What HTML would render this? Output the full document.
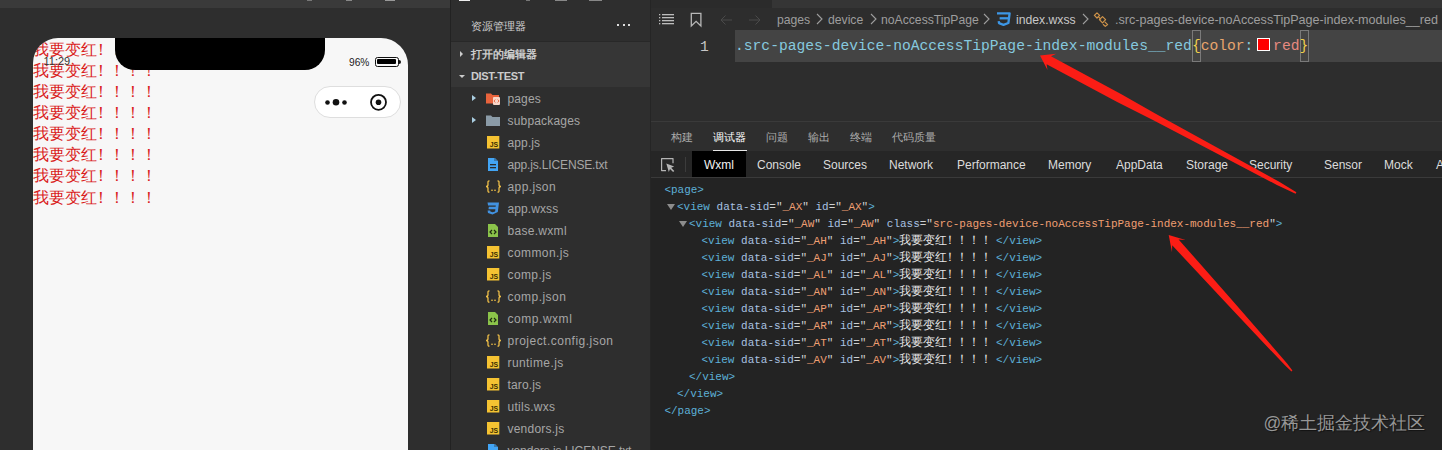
<!DOCTYPE html>
<html><head><meta charset="utf-8">
<style>
*{margin:0;padding:0;box-sizing:border-box}
html,body{width:1442px;height:450px;overflow:hidden;background:#2d2d2d;font-family:"Liberation Sans",sans-serif}
.a{position:absolute}
.mono{font-family:"Liberation Mono",monospace}
#sim{left:0;top:0;width:450px;height:450px;background:#2e2e2e;overflow:hidden}
#simtop{left:0;top:0;width:450px;height:8px;background:#3a3a3a}
#phone{left:33px;top:38px;width:375px;height:420px;background:#f7f7f7;border-radius:25px 27px 0 0;overflow:hidden}
.ex{margin-left:-4.1px;letter-spacing:0.05px}
.rl{position:absolute;left:0;color:#da1d1d;font-size:16px;line-height:21px;white-space:pre}
#notch{left:82px;top:0;width:210px;height:32px;background:#000;border-radius:0 0 20px 20px}
#sep1{left:450px;top:0;width:1px;height:450px;background:#222}
#exp{left:451px;top:0;width:199px;height:450px;background:#2e2e2e;overflow:hidden}
#sep2{left:650px;top:0;width:1px;height:450px;background:#252525}
#ed{left:651px;top:0;width:791px;height:450px;background:#2d2d2d;overflow:hidden}
.row{position:absolute;left:0;width:199px;height:22px;color:#a6a6a6;font-size:12px;line-height:22px;white-space:pre}
.row .t{position:absolute;left:56.5px;top:1px}
.row .tri{position:absolute;left:21px;top:8px;width:0;height:0;border-left:4.5px solid #a9cde0;border-top:3px solid transparent;border-bottom:3px solid transparent}
.row .ic{position:absolute;left:35px;top:5px;width:14px;height:13px}
.wx{font-size:10.99px;line-height:17px;white-space:pre;color:#cfd0d0}
.tg{color:#5db0d7}
.an{color:#a9c2e2}
.av{color:#f09f72}
.eq{color:#cfd0d0}
.cj{font-family:"Liberation Sans",sans-serif;font-size:11.6px;line-height:0;color:#e6e6e6;margin-right:3.9px}
.wtri{width:0;height:0;border-top:6px solid #8c8c8c;border-left:4px solid transparent;border-right:4px solid transparent}
.bc{top:11.7px;font-size:12.2px;color:#9e9e9e;white-space:pre;line-height:16px}
.chev{top:13px;width:8px;height:12px}
.chev path{fill:none;stroke:#9e9e9e;stroke-width:1.1}
.code{font-size:14.65px;line-height:18px;white-space:pre}
.ptab{top:130px;font-size:11.3px;color:#acacac;line-height:14px;white-space:pre}
.dtab{top:158px;font-size:12px;color:#dcdcdc;line-height:14px;white-space:pre}
</style></head><body>
<div id="sim" class="a">
  <div id="simtop" class="a"></div>
  <div class="a" style="left:307px;top:0;width:5px;height:1px;background:#777"></div>
  <div class="a" style="left:346px;top:0;width:6px;height:1px;background:#888"></div>
  <div class="a" style="left:385px;top:0;width:10px;height:1px;background:#999"></div>

  <div id="phone" class="a">
    <div class="rl" style="top:0.8px">我要变红<span class="ex">！！！！</span></div>
    <div class="rl" style="top:21.9px">我要变红<span class="ex">！！！！</span></div>
    <div class="rl" style="top:43.0px">我要变红<span class="ex">！！！！</span></div>
    <div class="rl" style="top:64.1px">我要变红<span class="ex">！！！！</span></div>
    <div class="rl" style="top:85.2px">我要变红<span class="ex">！！！！</span></div>
    <div class="rl" style="top:106.3px">我要变红<span class="ex">！！！！</span></div>
    <div class="rl" style="top:127.4px">我要变红<span class="ex">！！！！</span></div>
    <div class="rl" style="top:148.5px">我要变红<span class="ex">！！！！</span></div>
    <div id="notch" class="a"></div>
    <div class="a" style="left:10.5px;top:16.8px;font-size:11px;color:#333">11:29</div>
    <div class="a" style="left:316px;top:18.6px;font-size:10.2px;color:#1a1a1a">96%</div>
    <div class="a" style="left:342px;top:19px;width:23.5px;height:10.3px;border:1.5px solid #111;border-radius:2.5px"><div class="a" style="left:0.8px;top:0.8px;width:18.8px;height:5.7px;background:#000;border-radius:1px"></div></div>
    <div class="a" style="left:366px;top:22px;width:2px;height:4px;background:#111;border-radius:0 2px 2px 0"></div>
    <div class="a" style="left:281px;top:48px;width:87px;height:32px;border:1px solid #dedede;border-radius:16px;background:#fff"></div>
    <svg class="a" style="left:280px;top:48px" width="90" height="34" viewBox="0 0 90 34"><g fill="#111"><circle cx="14.5" cy="16.5" r="2.3"/><circle cx="23" cy="16.3" r="3.3"/><circle cx="31.5" cy="16.5" r="2.3"/><circle cx="65.5" cy="16.3" r="2.8"/></g><circle cx="65.5" cy="16.3" r="7.5" fill="none" stroke="#111" stroke-width="1.8"/></svg>
  </div>
</div>
<div id="sep1" class="a"></div>
<div id="exp" class="a">
  <div class="a" style="left:8px;top:0;width:11px;height:1px;background:#eee"></div>
  <div class="a" style="left:75px;top:0;width:4px;height:1px;background:#777"></div>
  <div class="a" style="left:104px;top:0;width:12px;height:1px;background:#888"></div>
  <div class="a" style="left:138px;top:0;width:13px;height:1px;background:#888"></div>
  <div class="a" style="left:20px;top:19px;font-size:11px;color:#d0d0d0">资源管理器</div>
  <div class="a" style="left:166px;top:24px;width:2px;height:2px;background:#ddd"></div><div class="a" style="left:171.5px;top:24px;width:2px;height:2px;background:#ddd"></div><div class="a" style="left:177px;top:24px;width:2px;height:2px;background:#ddd"></div>
  <div class="a" style="left:0;top:41px;width:199px;height:1px;background:#282828"></div>
  <div class="a" style="left:0;top:42px;width:199px;height:45px;background:#363636"></div>
  <div class="a" style="left:8.5px;top:50.5px;width:0;height:0;border-left:3.8px solid #ccc;border-top:3.3px solid transparent;border-bottom:3.3px solid transparent"></div>
  <div class="a" style="left:20px;top:47px;font-size:11px;font-weight:bold;color:#ccc">打开的编辑器</div>
  
  <div class="a" style="left:7.8px;top:74.5px;width:0;height:0;border-top:3.8px solid #ccc;border-left:3.2px solid transparent;border-right:3.2px solid transparent"></div>
  <div class="a" style="left:20px;top:70px;font-size:11px;font-weight:bold;color:#ccc;letter-spacing:-0.35px">DIST-TEST</div>
  <div class="row" style="top:87px"><div class="tri"></div><svg class="ic" viewBox="0 0 14 13"><path d="M0 1.5h5l1.5 1.5H13v8.5H0z" fill="#e8633c"/><rect x="7" y="5" width="7" height="8" rx="1" fill="#f9d6c8"/><path d="M9.3 7.5l-1.3 1.5 1.3 1.5M11.7 7.5l1.3 1.5-1.3 1.5" stroke="#e8633c" stroke-width="0.9" fill="none"/></svg><span class="t" style="letter-spacing:0.12px">pages</span></div>
  <div class="row" style="top:109px"><div class="tri"></div><svg class="ic" viewBox="0 0 14 13"><path d="M0 1.5h5l1.5 1.5H14v9H0z" fill="#8b9ba7"/></svg><span class="t" style="letter-spacing:0.18px">subpackages</span></div>
  <div class="row" style="top:131px"><svg class="ic" viewBox="0 0 14 13"><rect x="1" y="-0.3" width="12.3" height="12.8" fill="#f5c332"/><text x="12.2" y="11.2" font-size="6.9" font-family="Liberation Sans" font-weight="bold" text-anchor="end" fill="#3a2e00">JS</text></svg><span class="t" style="letter-spacing:0.12px">app.js</span></div>
  <div class="row" style="top:153px"><svg class="ic" viewBox="0 0 14 13"><path d="M2 -1h6l4 4v11H2z" fill="#42a5f5"/><path d="M8 -1v4h4z" fill="#2b2b2b" opacity="0.35"/><rect x="4" y="6" width="6" height="1.3" fill="#2b2b2b"/><rect x="4" y="9" width="6" height="1.3" fill="#2b2b2b"/></svg><span class="t" style="letter-spacing:-0.15px">app.js.LICENSE.txt</span></div>
  <div class="row" style="top:175px"><svg class="ic" viewBox="0 0 17 13" style="left:33.5px;width:17px"><g fill="none" stroke="#efbf48" stroke-width="1.3"><path d="M4.5 0.8C2.5 0.8 3 2.5 3 4.5 3 5.8 2.3 6.5 1 6.5 2.3 6.5 3 7.2 3 8.5 3 10.5 2.5 12.2 4.5 12.2"/><path d="M12.5 0.8C14.5 0.8 14 2.5 14 4.5 14 5.8 14.7 6.5 16 6.5 14.7 6.5 14 7.2 14 8.5 14 10.5 14.5 12.2 12.5 12.2"/></g><rect x="6.3" y="9.6" width="1.4" height="1.4" fill="#efbf48"/><rect x="9.3" y="9.6" width="1.4" height="1.4" fill="#efbf48"/></svg><span class="t" style="letter-spacing:0.39px">app.json</span></div>
  <div class="row" style="top:197px"><svg class="ic" viewBox="0 0 14 13"><path d="M1.5 0.5h11.5l-1.2 9.5L6.5 12.5 2 11l-.4-2.5h2.6l.2 1 2.1.7 2.6-.8.3-2.2H2.5l.3-2.4h6.8l.2-1.4H2.1z" fill="#4292e0"/></svg><span class="t" style="letter-spacing:0.09px">app.wxss</span></div>
  <div class="row" style="top:219px"><svg class="ic" viewBox="0 0 14 13"><path d="M2 -1h6l4 4v11H2z" fill="#8bc34a"/><path d="M6 6l-2 2 2 2M8 6l2 2-2 2" stroke="#1e2a10" stroke-width="1.2" fill="none"/></svg><span class="t" style="letter-spacing:0.3px">base.wxml</span></div>
  <div class="row" style="top:241px"><svg class="ic" viewBox="0 0 14 13"><rect x="1" y="-0.3" width="12.3" height="12.8" fill="#f5c332"/><text x="12.2" y="11.2" font-size="6.9" font-family="Liberation Sans" font-weight="bold" text-anchor="end" fill="#3a2e00">JS</text></svg><span class="t" style="letter-spacing:0.41px">common.js</span></div>
  <div class="row" style="top:263px"><svg class="ic" viewBox="0 0 14 13"><rect x="1" y="-0.3" width="12.3" height="12.8" fill="#f5c332"/><text x="12.2" y="11.2" font-size="6.9" font-family="Liberation Sans" font-weight="bold" text-anchor="end" fill="#3a2e00">JS</text></svg><span class="t" style="letter-spacing:0.4px">comp.js</span></div>
  <div class="row" style="top:285px"><svg class="ic" viewBox="0 0 17 13" style="left:33.5px;width:17px"><g fill="none" stroke="#efbf48" stroke-width="1.3"><path d="M4.5 0.8C2.5 0.8 3 2.5 3 4.5 3 5.8 2.3 6.5 1 6.5 2.3 6.5 3 7.2 3 8.5 3 10.5 2.5 12.2 4.5 12.2"/><path d="M12.5 0.8C14.5 0.8 14 2.5 14 4.5 14 5.8 14.7 6.5 16 6.5 14.7 6.5 14 7.2 14 8.5 14 10.5 14.5 12.2 12.5 12.2"/></g><rect x="6.3" y="9.6" width="1.4" height="1.4" fill="#efbf48"/><rect x="9.3" y="9.6" width="1.4" height="1.4" fill="#efbf48"/></svg><span class="t" style="letter-spacing:0.46px">comp.json</span></div>
  <div class="row" style="top:307px"><svg class="ic" viewBox="0 0 14 13"><path d="M2 -1h6l4 4v11H2z" fill="#8bc34a"/><path d="M6 6l-2 2 2 2M8 6l2 2-2 2" stroke="#1e2a10" stroke-width="1.2" fill="none"/></svg><span class="t" style="letter-spacing:0.54px">comp.wxml</span></div>
  <div class="row" style="top:329px"><svg class="ic" viewBox="0 0 17 13" style="left:33.5px;width:17px"><g fill="none" stroke="#efbf48" stroke-width="1.3"><path d="M4.5 0.8C2.5 0.8 3 2.5 3 4.5 3 5.8 2.3 6.5 1 6.5 2.3 6.5 3 7.2 3 8.5 3 10.5 2.5 12.2 4.5 12.2"/><path d="M12.5 0.8C14.5 0.8 14 2.5 14 4.5 14 5.8 14.7 6.5 16 6.5 14.7 6.5 14 7.2 14 8.5 14 10.5 14.5 12.2 12.5 12.2"/></g><rect x="6.3" y="9.6" width="1.4" height="1.4" fill="#efbf48"/><rect x="9.3" y="9.6" width="1.4" height="1.4" fill="#efbf48"/></svg><span class="t" style="letter-spacing:0.49px">project.config.json</span></div>
  <div class="row" style="top:351px"><svg class="ic" viewBox="0 0 14 13"><rect x="1" y="-0.3" width="12.3" height="12.8" fill="#f5c332"/><text x="12.2" y="11.2" font-size="6.9" font-family="Liberation Sans" font-weight="bold" text-anchor="end" fill="#3a2e00">JS</text></svg><span class="t" style="letter-spacing:0.41px">runtime.js</span></div>
  <div class="row" style="top:373px"><svg class="ic" viewBox="0 0 14 13"><rect x="1" y="-0.3" width="12.3" height="12.8" fill="#f5c332"/><text x="12.2" y="11.2" font-size="6.9" font-family="Liberation Sans" font-weight="bold" text-anchor="end" fill="#3a2e00">JS</text></svg><span class="t" style="letter-spacing:0.15px">taro.js</span></div>
  <div class="row" style="top:395px"><svg class="ic" viewBox="0 0 14 13"><rect x="1" y="-0.3" width="12.3" height="12.8" fill="#f5c332"/><text x="12.2" y="11.2" font-size="6.9" font-family="Liberation Sans" font-weight="bold" text-anchor="end" fill="#3a2e00">JS</text></svg><span class="t" style="letter-spacing:0.28px">utils.wxs</span></div>
  <div class="row" style="top:417px"><svg class="ic" viewBox="0 0 14 13"><rect x="1" y="-0.3" width="12.3" height="12.8" fill="#f5c332"/><text x="12.2" y="11.2" font-size="6.9" font-family="Liberation Sans" font-weight="bold" text-anchor="end" fill="#3a2e00">JS</text></svg><span class="t" style="letter-spacing:0.22px">vendors.js</span></div>
  <div class="row" style="top:439px"><svg class="ic" viewBox="0 0 14 13"><path d="M2 -1h6l4 4v11H2z" fill="#42a5f5"/><path d="M8 -1v4h4z" fill="#2b2b2b" opacity="0.35"/><rect x="4" y="6" width="6" height="1.3" fill="#2b2b2b"/><rect x="4" y="9" width="6" height="1.3" fill="#2b2b2b"/></svg><span class="t" style="letter-spacing:-0.07px">vendors.js.LICENSE.txt</span></div>
</div>
<div id="sep2" class="a"></div>
<div id="ed" class="a">
  <div class="a" style="left:121px;top:0;width:670px;height:8px;background:#353535"></div>
  <div class="a" style="left:0;top:0;width:121px;height:8px;background:#2b2b2b"></div>
  <div class="a" style="left:0;top:8px;width:791px;height:22px;background:#2d2d2d"></div>
  <svg class="a" style="left:8px;top:12.8px" width="16" height="13" viewBox="0 0 16 13"><g fill="#bdbdbd"><rect x="0" y="1" width="1.3" height="1.3"/><rect x="3" y="1" width="12" height="1.3"/><rect x="0" y="4" width="1.3" height="1.3"/><rect x="3" y="4" width="12" height="1.3"/><rect x="0" y="7" width="1.3" height="1.3"/><rect x="3" y="7" width="12" height="1.3"/><rect x="0" y="10" width="1.3" height="1.3"/><rect x="3" y="10" width="12" height="1.3"/></g></svg>
  <svg class="a" style="left:39px;top:11.5px" width="13" height="16" viewBox="0 0 13 16"><path d="M1.3 1.3h9.6v12.6l-4.8-4.6-4.8 4.6z" fill="none" stroke="#b8b8b8" stroke-width="1.3"/></svg>
  <svg class="a" style="left:68px;top:13px" width="14" height="14" viewBox="0 0 14 14"><path d="M13 7H2M6.5 2.5L2 7l4.5 4.5" fill="none" stroke="#4a4a4a" stroke-width="1"/></svg>
  <svg class="a" style="left:97px;top:13px" width="14" height="14" viewBox="0 0 14 14"><path d="M1 7h11M7.5 2.5L12 7l-4.5 4.5" fill="none" stroke="#4a4a4a" stroke-width="1"/></svg>
  <div class="a bc" style="left:126px">pages</div>
  <svg class="a chev" style="left:165px"><path d="M1 1l5 5-5 5" /></svg>
  <div class="a bc" style="left:177px">device</div>
  <svg class="a chev" style="left:219px"><path d="M1 1l5 5-5 5" /></svg>
  <div class="a bc" style="left:230px">noAccessTipPage</div>
  <svg class="a chev" style="left:332px"><path d="M1 1l5 5-5 5" /></svg>
  <svg class="a" style="left:345px;top:12px" width="15" height="14" viewBox="0 0 15 14"><g fill="none" stroke="#3d97e6" stroke-width="2.3" stroke-linejoin="round"><path d="M1 1.3H13.6L12.4 11 7.5 12.8 3 11.2 2.7 9.2"/><path d="M3.6 6.3H12.6"/></g></svg>
  <div class="a bc" style="left:365px;color:#c8c8c8">index.wxss</div>
  <svg class="a chev" style="left:431px"><path d="M1 1l5 5-5 5" /></svg>
  <svg class="a" style="left:442px;top:12px" width="16" height="15" viewBox="0 0 16 15"><g fill="none" stroke="#d0944a" stroke-width="1.2" stroke-linejoin="round"><path d="M4 0.8L6.6 3.4 4 6 1.4 3.4z"/><path d="M5.3 4.7L8 7.4"/><path d="M9.5 4.6L12.6 7.7 9.5 10.8 6.4 7.7z"/><path d="M11.8 9.8L14.6 12.6 12.3 14.4 10 12.2"/></g></svg>
  <div class="a bc" style="left:464px;font-size:12.6px">.src-pages-device-noAccessTipPage-index-modules__red</div>
  <!-- code line -->
  <div class="a" style="left:84px;top:30px;width:707px;height:32px;background:#444"></div>
  <div class="a mono" style="left:49px;top:37.5px;font-size:14.65px;line-height:18px;color:#c6c6c6">1</div>
  <div class="a" style="left:541px;top:30px;width:9px;height:32px;border:1px solid #7a7a7a"></div>
  <div class="a" style="left:649px;top:30px;width:9px;height:32px;border:1px solid #7a7a7a"></div>
  <div class="a mono code" style="left:84px;top:37.3px"><span style="color:#86c9df">.src-pages-device-noAccessTipPage-index-modules__red</span><span style="color:#f0cf4c">{</span><span style="color:#e7a56d">color</span><span style="color:#86c9df">:</span><span style="display:inline-block;width:19.7px"></span><span style="color:#e68a80">red</span><span style="color:#f0cf4c">}</span></div>
  <div class="a" style="left:606px;top:38px;width:13px;height:13px;background:#f00;border:1px solid #fff"></div>
  <!-- bottom panel -->
  <div class="a" style="left:0;top:121px;width:791px;height:1px;background:#3a3a3a"></div>
  <div class="a" style="left:0;top:122px;width:791px;height:29px;background:#2e2e2e"></div>
  <div class="a ptab" style="left:20px">构建</div>
  <div class="a ptab" style="left:62px;color:#ffffff">调试器</div>
  <div class="a" style="left:62px;top:150px;width:34px;height:2px;background:#e8e8e8"></div>
  <div class="a ptab" style="left:115px">问题</div>
  <div class="a ptab" style="left:157px">输出</div>
  <div class="a ptab" style="left:199px">终端</div>
  <div class="a ptab" style="left:241px">代码质量</div>
  <div class="a" style="left:0;top:151px;width:791px;height:26px;background:#262626"></div>
  <div class="a" style="left:0;top:177px;width:791px;height:1px;background:#3a3a3a"></div>
  <div class="a" style="left:0;top:178px;width:791px;height:272px;background:#232323"></div>
  <svg class="a" style="left:10px;top:157.6px" width="16" height="16" viewBox="0 0 16 16"><path d="M5 12.6H0.6V0.6H12V5.2" fill="none" stroke="#b4b4b4" stroke-width="1.2" stroke-linejoin="round"/><path d="M5.3 5.6L13.2 8.6 10.2 9.8 13.3 12.9 12.1 14.1 9 11 7.8 14z" fill="#b4b4b4"/></svg>
  <div class="a" style="left:34px;top:157px;width:1px;height:15px;background:#3c3c3c"></div>
  <div class="a" style="left:41px;top:151px;width:54px;height:26px;background:#000"></div>
  <div class="a dtab" style="left:53px;color:#f2f2f2">Wxml</div>
  <div class="a dtab" style="left:106px">Console</div>
  <div class="a dtab" style="left:172px">Sources</div>
  <div class="a dtab" style="left:238px">Network</div>
  <div class="a dtab" style="left:306px">Performance</div>
  <div class="a dtab" style="left:397px">Memory</div>
  <div class="a dtab" style="left:465px">AppData</div>
  <div class="a dtab" style="left:535px">Storage</div>
  <div class="a dtab" style="left:598px">Security</div>
  <div class="a dtab" style="left:673px">Sensor</div>
  <div class="a dtab" style="left:733px">Mock</div>
  <div class="a dtab" style="left:785px">AppData</div>
  <div class="a mono wx" style="left:13.4px;top:182.4px"><span class="tg">&lt;page&gt;</span></div>
  <div class="a mono wx" style="left:26.0px;top:199.3px"><span class="tg">&lt;view</span> <span class="an">data-sid</span><span class="eq">="</span><span class="av">_AX</span><span class="eq">"</span> <span class="an">id</span><span class="eq">="</span><span class="av">_AX</span><span class="eq">"</span><span class="tg">&gt;</span></div>
  <div class="a wtri" style="left:15.7px;top:204.3px"></div>
  <div class="a mono wx" style="left:38.0px;top:216.3px"><span class="tg">&lt;view</span> <span class="an">data-sid</span><span class="eq">="</span><span class="av">_AW</span><span class="eq">"</span> <span class="an">id</span><span class="eq">="</span><span class="av">_AW</span><span class="eq">"</span> <span class="an">class</span><span class="eq">="</span><span class="av">src-pages-device-noAccessTipPage-index-modules__red</span><span class="eq">"</span><span class="tg">&gt;</span></div>
  <div class="a wtri" style="left:28.0px;top:221.3px"></div>
  <div class="a mono wx" style="left:50.5px;top:233.2px"><span class="tg">&lt;view</span> <span class="an">data-sid</span><span class="eq">="</span><span class="av">_AH</span><span class="eq">"</span> <span class="an">id</span><span class="eq">="</span><span class="av">_AH</span><span class="eq">"</span><span class="tg">&gt;</span><span class="cj">我要变红<span style="margin-left:-3.2px">！！！！</span></span><span class="tg">&lt;/view&gt;</span></div>
  <div class="a mono wx" style="left:50.5px;top:250.1px"><span class="tg">&lt;view</span> <span class="an">data-sid</span><span class="eq">="</span><span class="av">_AJ</span><span class="eq">"</span> <span class="an">id</span><span class="eq">="</span><span class="av">_AJ</span><span class="eq">"</span><span class="tg">&gt;</span><span class="cj">我要变红<span style="margin-left:-3.2px">！！！！</span></span><span class="tg">&lt;/view&gt;</span></div>
  <div class="a mono wx" style="left:50.5px;top:267.1px"><span class="tg">&lt;view</span> <span class="an">data-sid</span><span class="eq">="</span><span class="av">_AL</span><span class="eq">"</span> <span class="an">id</span><span class="eq">="</span><span class="av">_AL</span><span class="eq">"</span><span class="tg">&gt;</span><span class="cj">我要变红<span style="margin-left:-3.2px">！！！！</span></span><span class="tg">&lt;/view&gt;</span></div>
  <div class="a mono wx" style="left:50.5px;top:284.0px"><span class="tg">&lt;view</span> <span class="an">data-sid</span><span class="eq">="</span><span class="av">_AN</span><span class="eq">"</span> <span class="an">id</span><span class="eq">="</span><span class="av">_AN</span><span class="eq">"</span><span class="tg">&gt;</span><span class="cj">我要变红<span style="margin-left:-3.2px">！！！！</span></span><span class="tg">&lt;/view&gt;</span></div>
  <div class="a mono wx" style="left:50.5px;top:300.9px"><span class="tg">&lt;view</span> <span class="an">data-sid</span><span class="eq">="</span><span class="av">_AP</span><span class="eq">"</span> <span class="an">id</span><span class="eq">="</span><span class="av">_AP</span><span class="eq">"</span><span class="tg">&gt;</span><span class="cj">我要变红<span style="margin-left:-3.2px">！！！！</span></span><span class="tg">&lt;/view&gt;</span></div>
  <div class="a mono wx" style="left:50.5px;top:317.8px"><span class="tg">&lt;view</span> <span class="an">data-sid</span><span class="eq">="</span><span class="av">_AR</span><span class="eq">"</span> <span class="an">id</span><span class="eq">="</span><span class="av">_AR</span><span class="eq">"</span><span class="tg">&gt;</span><span class="cj">我要变红<span style="margin-left:-3.2px">！！！！</span></span><span class="tg">&lt;/view&gt;</span></div>
  <div class="a mono wx" style="left:50.5px;top:334.8px"><span class="tg">&lt;view</span> <span class="an">data-sid</span><span class="eq">="</span><span class="av">_AT</span><span class="eq">"</span> <span class="an">id</span><span class="eq">="</span><span class="av">_AT</span><span class="eq">"</span><span class="tg">&gt;</span><span class="cj">我要变红<span style="margin-left:-3.2px">！！！！</span></span><span class="tg">&lt;/view&gt;</span></div>
  <div class="a mono wx" style="left:50.5px;top:351.7px"><span class="tg">&lt;view</span> <span class="an">data-sid</span><span class="eq">="</span><span class="av">_AV</span><span class="eq">"</span> <span class="an">id</span><span class="eq">="</span><span class="av">_AV</span><span class="eq">"</span><span class="tg">&gt;</span><span class="cj">我要变红<span style="margin-left:-3.2px">！！！！</span></span><span class="tg">&lt;/view&gt;</span></div>
  <div class="a mono wx" style="left:38.0px;top:368.6px"><span class="tg">&lt;/view&gt;</span></div>
  <div class="a mono wx" style="left:26.0px;top:385.6px"><span class="tg">&lt;/view&gt;</span></div>
  <div class="a mono wx" style="left:13.4px;top:402.5px"><span class="tg">&lt;/page&gt;</span></div>
  <div class="a" style="left:612.5px;top:411.3px;font-size:17.5px;color:#979797;white-space:pre;text-shadow:1px 1px 1px rgba(0,0,0,0.5)">@稀土掘金技术社区</div>
</div>
<!--ARROWS--><svg class="a" style="left:0;top:0" width="1442" height="450" viewBox="0 0 1442 450"><polygon points="1040.0,55.5 1056.2,53.8 1051.0,56.2 1121.4,94.2 1156.1,114.0 1217.4,147.8 1278.8,181.5 1296.4,192.3 1295.6,193.7 1276.9,185.0 1215.0,152.4 1152.9,120.0 1117.2,102.0 1046.6,64.3 1047.5,70.0" fill="#fb1d15"/><polygon points="1168.7,235.0 1185.6,239.9 1178.6,239.5 1198.5,262.0 1231.5,299.5 1264.4,337.2 1287.3,363.7 1292.4,370.6 1291.5,371.4 1285.2,365.6 1261.1,340.2 1226.8,303.8 1192.7,267.3 1172.2,245.3 1172.0,252.3" fill="#fb1d15"/></svg><!--/ARROWS-->
</body></html>
